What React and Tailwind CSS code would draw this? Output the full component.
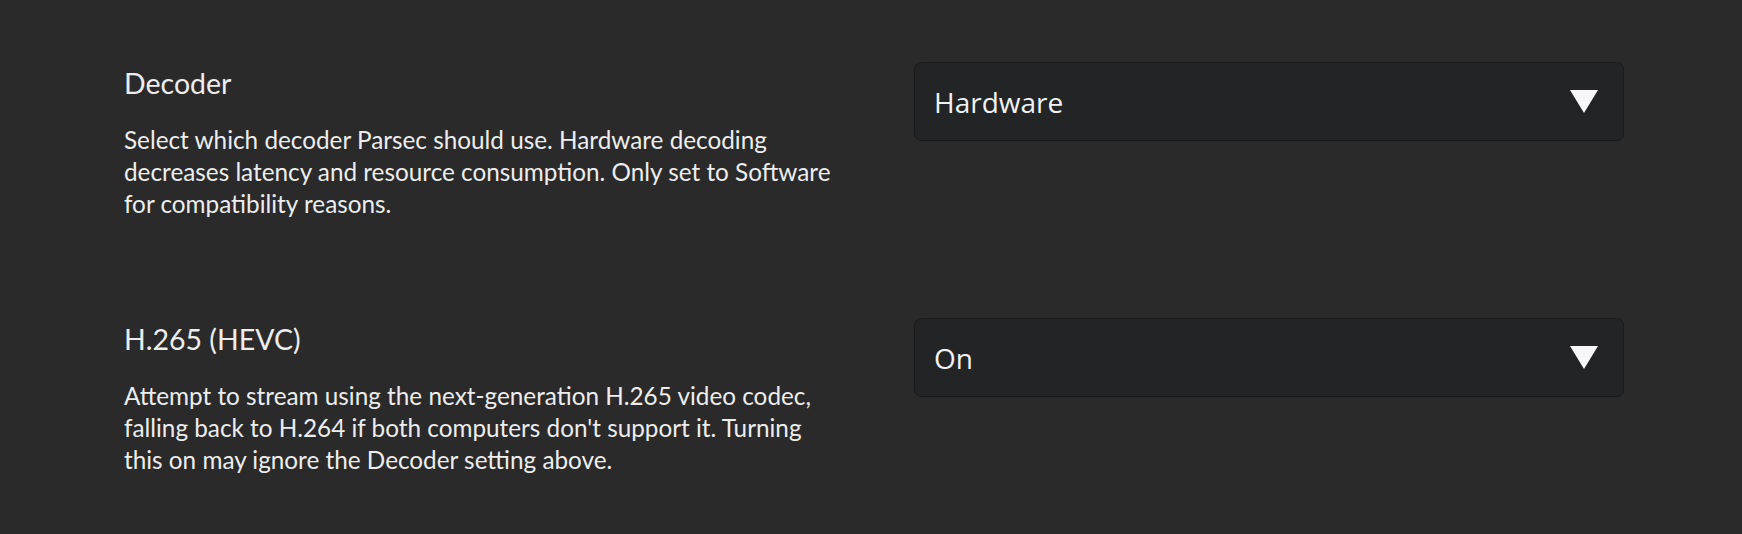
import React from 'react';

const settings = [
  {
    title: 'Decoder',
    description: [
      'Select which decoder Parsec should use. Hardware decoding',
      'decreases latency and resource consumption. Only set to Software',
      'for compatibility reasons.',
    ],
    value: 'Hardware',
  },
  {
    title: 'H.265 (HEVC)',
    description: [
      'Attempt to stream using the next-generation H.265 video codec,',
      "falling back to H.264 if both computers don't support it. Turning",
      'this on may ignore the Decoder setting above.',
    ],
    value: 'On',
  },
];

const Caret = () => (
  <svg width="28" height="23" viewBox="0 0 28 23" className="shrink-0">
    <polygon points="0,0 28,0 14,23" fill="#f7f7f9" />
  </svg>
);

const SettingRow = ({ title, description, value }) => (
  <div className="flex h-[256px]">
    {/* Label + help text */}
    <div className="w-[790px] shrink-0 pt-[4px]" style={{ fontFamily: 'Lato, sans-serif' }}>
      <h3 className="text-[28.5px] leading-[34px] text-[#ededed]">{title}</h3>
      <p className="mt-[24px] text-[24.3px] leading-[32px] text-[#ededed]">
        {description.map((line) => (
          <span key={line} className="block whitespace-nowrap">
            {line}
          </span>
        ))}
      </p>
    </div>

    {/* Dropdown */}
    <div className="flex-1">
      <div className="flex h-[79px] items-center justify-between rounded-[7px] border border-[#1a1b1d] bg-[#232426] pl-[19px] pr-[25px]">
        <span className="text-[28px] text-[#f2f2f4]" style={{ fontFamily: '"Open Sans", sans-serif' }}>
          {value}
        </span>
        <Caret />
      </div>
    </div>
  </div>
);

export default function App() {
  return (
    <div className="h-[534px] overflow-hidden bg-[#2a2a2a] pl-[124px] pr-[118px] pt-[62px]">
      {settings.map((s) => (
        <SettingRow key={s.title} {...s} />
      ))}
    </div>
  );
}
